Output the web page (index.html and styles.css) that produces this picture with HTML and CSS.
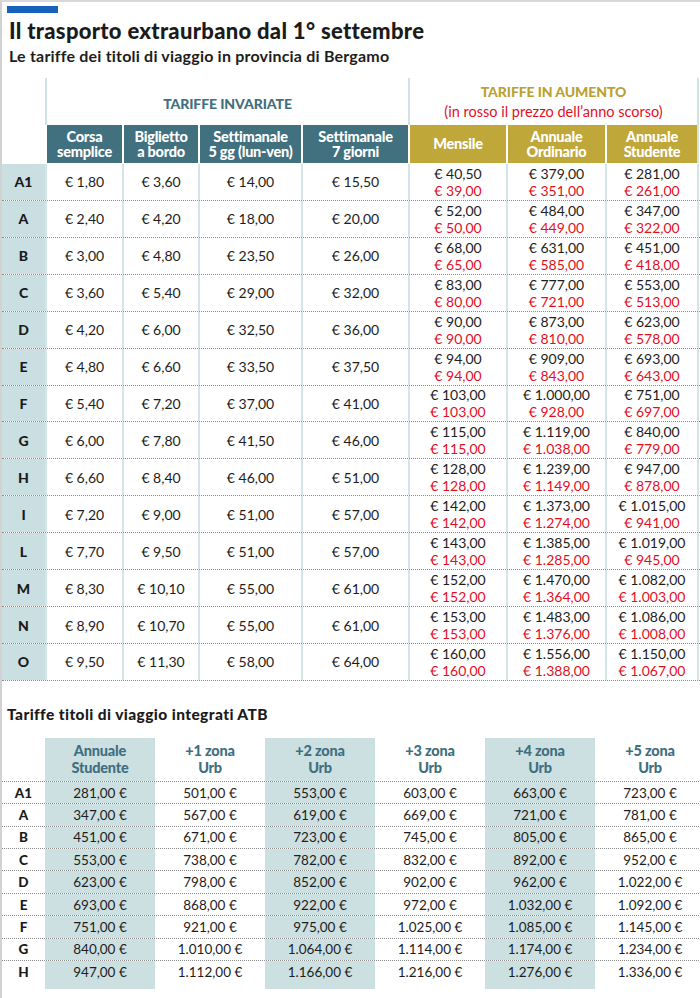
FILE: index.html
```html
<!DOCTYPE html>
<html lang="it">
<head>
<meta charset="utf-8">
<title>Il trasporto extraurbano dal 1° settembre</title>
<link rel="stylesheet" href="styles.css">
</head>
<body>
<div class="frame">
  <div class="bar"></div>
  <h1 class="title">Il trasporto extraurbano dal 1° settembre</h1>
  <p class="subtitle">Le tariffe dei titoli di viaggio in provincia di Bergamo</p>

  <div class="tbl">
    <div class="trow band">
      <div class="band-empty"></div>
      <div class="band-inv">TARIFFE INVARIATE</div>
      <div class="band-aum">
        <span class="aum-title">TARIFFE IN AUMENTO</span>
        <span class="aum-note">(in rosso il prezzo dell’anno scorso)</span>
      </div>
    </div>
    <div class="trow head">
      <div class="hc-empty"></div>
      <div class="hc teal">Corsa<br>semplice</div>
      <div class="hc teal">Biglietto<br>a bordo</div>
      <div class="hc teal">Settimanale<br>5 gg (lun-ven)</div>
      <div class="hc teal">Settimanale<br>7 giorni</div>
      <div class="hc gold">Mensile</div>
      <div class="hc gold">Annuale<br>Ordinario</div>
      <div class="hc gold last">Annuale<br>Studente</div>
    </div>

    <div class="trow data"><div class="lab">A1</div><div class="dc">€ 1,80</div><div class="dc">€ 3,60</div><div class="dc">€ 14,00</div><div class="dc">€ 15,50</div><div class="dc two"><span>€ 40,50</span><span class="old">€ 39,00</span></div><div class="dc two"><span>€ 379,00</span><span class="old">€ 351,00</span></div><div class="dc two last"><span>€ 281,00</span><span class="old">€ 261,00</span></div></div>
    <div class="trow data"><div class="lab">A</div><div class="dc">€ 2,40</div><div class="dc">€ 4,20</div><div class="dc">€ 18,00</div><div class="dc">€ 20,00</div><div class="dc two"><span>€ 52,00</span><span class="old">€ 50,00</span></div><div class="dc two"><span>€ 484,00</span><span class="old">€ 449,00</span></div><div class="dc two last"><span>€ 347,00</span><span class="old">€ 322,00</span></div></div>
    <div class="trow data"><div class="lab">B</div><div class="dc">€ 3,00</div><div class="dc">€ 4,80</div><div class="dc">€ 23,50</div><div class="dc">€ 26,00</div><div class="dc two"><span>€ 68,00</span><span class="old">€ 65,00</span></div><div class="dc two"><span>€ 631,00</span><span class="old">€ 585,00</span></div><div class="dc two last"><span>€ 451,00</span><span class="old">€ 418,00</span></div></div>
    <div class="trow data"><div class="lab">C</div><div class="dc">€ 3,60</div><div class="dc">€ 5,40</div><div class="dc">€ 29,00</div><div class="dc">€ 32,00</div><div class="dc two"><span>€ 83,00</span><span class="old">€ 80,00</span></div><div class="dc two"><span>€ 777,00</span><span class="old">€ 721,00</span></div><div class="dc two last"><span>€ 553,00</span><span class="old">€ 513,00</span></div></div>
    <div class="trow data"><div class="lab">D</div><div class="dc">€ 4,20</div><div class="dc">€ 6,00</div><div class="dc">€ 32,50</div><div class="dc">€ 36,00</div><div class="dc two"><span>€ 90,00</span><span class="old">€ 90,00</span></div><div class="dc two"><span>€ 873,00</span><span class="old">€ 810,00</span></div><div class="dc two last"><span>€ 623,00</span><span class="old">€ 578,00</span></div></div>
    <div class="trow data"><div class="lab">E</div><div class="dc">€ 4,80</div><div class="dc">€ 6,60</div><div class="dc">€ 33,50</div><div class="dc">€ 37,50</div><div class="dc two"><span>€ 94,00</span><span class="old">€ 94,00</span></div><div class="dc two"><span>€ 909,00</span><span class="old">€ 843,00</span></div><div class="dc two last"><span>€ 693,00</span><span class="old">€ 643,00</span></div></div>
    <div class="trow data"><div class="lab">F</div><div class="dc">€ 5,40</div><div class="dc">€ 7,20</div><div class="dc">€ 37,00</div><div class="dc">€ 41,00</div><div class="dc two"><span>€ 103,00</span><span class="old">€ 103,00</span></div><div class="dc two"><span>€ 1.000,00</span><span class="old">€ 928,00</span></div><div class="dc two last"><span>€ 751,00</span><span class="old">€ 697,00</span></div></div>
    <div class="trow data"><div class="lab">G</div><div class="dc">€ 6,00</div><div class="dc">€ 7,80</div><div class="dc">€ 41,50</div><div class="dc">€ 46,00</div><div class="dc two"><span>€ 115,00</span><span class="old">€ 115,00</span></div><div class="dc two"><span>€ 1.119,00</span><span class="old">€ 1.038,00</span></div><div class="dc two last"><span>€ 840,00</span><span class="old">€ 779,00</span></div></div>
    <div class="trow data"><div class="lab">H</div><div class="dc">€ 6,60</div><div class="dc">€ 8,40</div><div class="dc">€ 46,00</div><div class="dc">€ 51,00</div><div class="dc two"><span>€ 128,00</span><span class="old">€ 128,00</span></div><div class="dc two"><span>€ 1.239,00</span><span class="old">€ 1.149,00</span></div><div class="dc two last"><span>€ 947,00</span><span class="old">€ 878,00</span></div></div>
    <div class="trow data"><div class="lab">I</div><div class="dc">€ 7,20</div><div class="dc">€ 9,00</div><div class="dc">€ 51,00</div><div class="dc">€ 57,00</div><div class="dc two"><span>€ 142,00</span><span class="old">€ 142,00</span></div><div class="dc two"><span>€ 1.373,00</span><span class="old">€ 1.274,00</span></div><div class="dc two last"><span>€ 1.015,00</span><span class="old">€ 941,00</span></div></div>
    <div class="trow data"><div class="lab">L</div><div class="dc">€ 7,70</div><div class="dc">€ 9,50</div><div class="dc">€ 51,00</div><div class="dc">€ 57,00</div><div class="dc two"><span>€ 143,00</span><span class="old">€ 143,00</span></div><div class="dc two"><span>€ 1.385,00</span><span class="old">€ 1.285,00</span></div><div class="dc two last"><span>€ 1.019,00</span><span class="old">€ 945,00</span></div></div>
    <div class="trow data"><div class="lab">M</div><div class="dc">€ 8,30</div><div class="dc">€ 10,10</div><div class="dc">€ 55,00</div><div class="dc">€ 61,00</div><div class="dc two"><span>€ 152,00</span><span class="old">€ 152,00</span></div><div class="dc two"><span>€ 1.470,00</span><span class="old">€ 1.364,00</span></div><div class="dc two last"><span>€ 1.082,00</span><span class="old">€ 1.003,00</span></div></div>
    <div class="trow data"><div class="lab">N</div><div class="dc">€ 8,90</div><div class="dc">€ 10,70</div><div class="dc">€ 55,00</div><div class="dc">€ 61,00</div><div class="dc two"><span>€ 153,00</span><span class="old">€ 153,00</span></div><div class="dc two"><span>€ 1.483,00</span><span class="old">€ 1.376,00</span></div><div class="dc two last"><span>€ 1.086,00</span><span class="old">€ 1.008,00</span></div></div>
    <div class="trow data"><div class="lab">O</div><div class="dc">€ 9,50</div><div class="dc">€ 11,30</div><div class="dc">€ 58,00</div><div class="dc">€ 64,00</div><div class="dc two"><span>€ 160,00</span><span class="old">€ 160,00</span></div><div class="dc two"><span>€ 1.556,00</span><span class="old">€ 1.388,00</span></div><div class="dc two last"><span>€ 1.150,00</span><span class="old">€ 1.067,00</span></div></div>
  </div>

  <h2 class="section">Tariffe titoli di viaggio integrati ATB</h2>

  <div class="tbl2">
    <div class="brow bhead"><div></div><div class="sh">Annuale<br>Studente</div><div>+1 zona<br>Urb</div><div class="sh">+2 zona<br>Urb</div><div>+3 zona<br>Urb</div><div class="sh">+4 zona<br>Urb</div><div>+5 zona<br>Urb</div></div>
    <div class="brow bdata"><div class="blab">A1</div><div class="sh">281,00 €</div><div>501,00 €</div><div class="sh">553,00 €</div><div>603,00 €</div><div class="sh">663,00 €</div><div>723,00 €</div></div>
    <div class="brow bdata"><div class="blab">A</div><div class="sh">347,00 €</div><div>567,00 €</div><div class="sh">619,00 €</div><div>669,00 €</div><div class="sh">721,00 €</div><div>781,00 €</div></div>
    <div class="brow bdata"><div class="blab">B</div><div class="sh">451,00 €</div><div>671,00 €</div><div class="sh">723,00 €</div><div>745,00 €</div><div class="sh">805,00 €</div><div>865,00 €</div></div>
    <div class="brow bdata"><div class="blab">C</div><div class="sh">553,00 €</div><div>738,00 €</div><div class="sh">782,00 €</div><div>832,00 €</div><div class="sh">892,00 €</div><div>952,00 €</div></div>
    <div class="brow bdata"><div class="blab">D</div><div class="sh">623,00 €</div><div>798,00 €</div><div class="sh">852,00 €</div><div>902,00 €</div><div class="sh">962,00 €</div><div>1.022,00 €</div></div>
    <div class="brow bdata"><div class="blab">E</div><div class="sh">693,00 €</div><div>868,00 €</div><div class="sh">922,00 €</div><div>972,00 €</div><div class="sh">1.032,00 €</div><div>1.092,00 €</div></div>
    <div class="brow bdata"><div class="blab">F</div><div class="sh">751,00 €</div><div>921,00 €</div><div class="sh">975,00 €</div><div>1.025,00 €</div><div class="sh">1.085,00 €</div><div>1.145,00 €</div></div>
    <div class="brow bdata"><div class="blab">G</div><div class="sh">840,00 €</div><div>1.010,00 €</div><div class="sh">1.064,00 €</div><div>1.114,00 €</div><div class="sh">1.174,00 €</div><div>1.234,00 €</div></div>
    <div class="brow bdata nob"><div class="blab">H</div><div class="sh">947,00 €</div><div>1.112,00 €</div><div class="sh">1.166,00 €</div><div>1.216,00 €</div><div class="sh">1.276,00 €</div><div>1.336,00 €</div></div>
    <div class="brow bpad"><div></div><div class="sh"></div><div></div><div class="sh"></div><div></div><div class="sh"></div><div></div></div>
  </div>
</div>
</body>
</html>
```

FILE: styles.css
```css
* { box-sizing: border-box; }

html, body {
  margin: 0;
  padding: 0;
  background: #ffffff;
}

.frame {
  width: 700px;
  height: 998px;
  border-top: 2px solid #d8d8d8;
  border-left: 2px solid #d2d2d2;
  overflow: hidden;
  font-family: Lato, "Open Sans", "Liberation Sans", sans-serif;
  color: #1d1d1d;
}

.bar {
  width: 51px;
  height: 7px;
  margin: 4px 0 0 5px;
  background: #1762bb;
}

.title {
  margin: 6px 0 0 7px;
  font-weight: 900;
  font-size: 22px;
  line-height: 24px;
  letter-spacing: 0.3px;
  color: #1b1b1b;
}

.subtitle {
  margin: 4px 0 0 7px;
  font-weight: 700;
  font-size: 16px;
  line-height: 18px;
  letter-spacing: 0.2px;
  color: #1d1d1d;
}

/* ---------- top table ---------- */
.tbl {
  margin-top: 13px;
}

.trow {
  display: grid;
  grid-template-columns: 43px 77px 76px 103px 107px 98px 99px 94px;
}

.band {
  height: 47px;
}

.band-inv {
  grid-column: 2 / 6;
  border-left: 2px solid #cfe2e4;
  display: flex;
  align-items: center;
  justify-content: center;
  padding-top: 3px;
  font-weight: 900;
  font-size: 14px;
  letter-spacing: -0.1px;
  color: #3f6f80;
}

.band-aum {
  grid-column: 6 / 9;
  border-left: 2px solid #cfe2e4;
  border-right: 2px solid #cfe2e4;
  display: flex;
  flex-direction: column;
  align-items: center;
  justify-content: center;
  line-height: 20px;
}

.aum-title {
  font-weight: 900;
  font-size: 14px;
  letter-spacing: -0.1px;
  color: #b9a233;
}

.aum-note {
  font-weight: 400;
  font-size: 14.5px;
  color: #e2101f;
}

.head {
  height: 38px;
  margin-bottom: 1px;
}

.hc {
  display: flex;
  align-items: center;
  justify-content: center;
  text-align: center;
  border-left: 2px solid #ffffff;
  font-weight: 900;
  font-size: 14.5px;
  line-height: 15.5px;
  letter-spacing: -0.25px;
  color: #ffffff;
}

.hc.teal { background: #41707f; }
.hc.gold { background: #bfa73a; }
.hc.last { border-right: 2px solid #cfe2e4; }

.data {
  height: 36.93px;
  border-bottom: 1px dotted #8c8c8c;
}

.lab {
  background: #c9dfe1;
  display: flex;
  align-items: center;
  justify-content: center;
  font-weight: 900;
  font-size: 14px;
  color: #1a1a1a;
}

.dc {
  border-left: 2px solid #d3e5e7;
  display: flex;
  flex-direction: column;
  align-items: center;
  justify-content: center;
  font-size: 14px;
  line-height: 17px;
  color: #1d1d1d;
}

.dc.last { border-right: 2px solid #d3e5e7; }

.dc .old { color: #e2101f; }

/* ---------- bottom table ---------- */
.section {
  margin: 24px 0 0 5px;
  font-weight: 900;
  font-size: 15.5px;
  line-height: 18px;
  letter-spacing: 0.4px;
  color: #1b1b1b;
}

.tbl2 {
  margin-top: 15px;
  width: 703px;
}

.brow {
  display: grid;
  grid-template-columns: 43px repeat(6, 110px);
}

.brow > div {
  display: flex;
  align-items: center;
  justify-content: center;
  text-align: center;
}

.brow .sh { background: #cce0e2; }

.bhead {
  height: 44px;
  border-bottom: 1px dotted #8c8c8c;
  font-weight: 900;
  font-size: 14.5px;
  line-height: 17.5px;
  letter-spacing: -0.2px;
  color: #3f6f80;
}

.bdata {
  height: 22.4px;
  border-bottom: 1px dotted #8c8c8c;
  font-size: 13.5px;
  color: #1d1d1d;
}

.bdata.nob { border-bottom: none; }

.blab {
  font-weight: 900;
  font-size: 13.5px;
  color: #1a1a1a;
}

.bpad { height: 5.5px; }
```
